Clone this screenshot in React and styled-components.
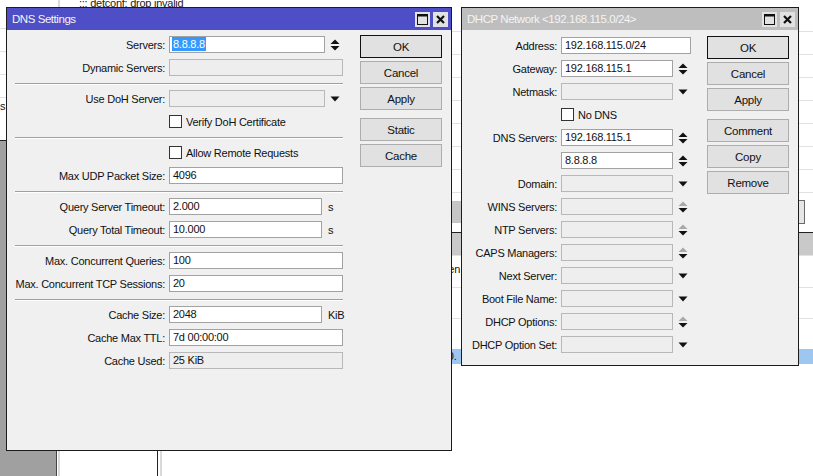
import React from 'react';
import styled, { createGlobalStyle } from 'styled-components';

const GlobalStyle = createGlobalStyle`
  body {
    margin: 0;
    font-family: 'Liberation Sans', Arial, sans-serif;
    font-size: 11px;
    letter-spacing: -0.25px;
    color: #111;
  }
`;

const Desktop = styled.div`
  position: relative;
  width: 813px;
  height: 476px;
  overflow: hidden;
  background: #a0a0a0;
`;

/* ---------- windows behind the dialogs ---------- */

const LeftBack = styled.div`
  position: absolute;
  left: 0;
  top: 0;
  width: 57px;
  height: 140px;
  background: #fff;
  border-bottom: 1px solid #222;
  display: flex;
  flex-direction: column;
`;

const Lines = styled.div`
  height: ${(p) => p.$h}px;
  flex-shrink: 0;
  background: repeating-linear-gradient(
    to bottom,
    transparent 0 ${(p) => p.$pitch - 1}px,
    #e2e2e2 ${(p) => p.$pitch - 1}px ${(p) => p.$pitch}px
  );
  background-position: 0 ${(p) => p.$off || 0}px;
`;

const CutText = styled.div`
  white-space: nowrap;
  padding-left: ${(p) => p.$pad || 0}px;
  padding-top: ${(p) => p.$top || 0}px;
  line-height: 13px;
`;

const BackList = styled.div`
  position: absolute;
  left: 56px;
  top: 0;
  width: 760px;
  height: 476px;
  background: #fff;
  border-left: 1px solid #444;
  display: flex;
  flex-direction: column;
`;

const LogRow = styled.div`
  height: 9px;
  flex-shrink: 0;
  border-left: 2px solid #dadada;
  margin-left: 1px;
  padding-left: 19px;
  line-height: 13px;
  margin-top: -3px;
  padding-top: 0;
  white-space: nowrap;
  color: #222;
  overflow: visible;
`;

const ListColumns = styled.div`
  flex: 1;
  display: flex;
`;

const ListColumn = styled.div`
  width: ${(p) => (p.$w ? `${p.$w}px` : 'auto')};
  flex: ${(p) => (p.$w ? 'none' : '1')};
  margin-left: ${(p) => p.$gap}px;
  border-left: 2px solid #dadada;
  border-right: ${(p) => (p.$w ? '1px solid #222' : 'none')};
`;

const BackTable = styled.div`
  position: absolute;
  left: 440px;
  top: 0;
  width: 373px;
  height: 380px;
  background: #fff;
  display: flex;
  flex-direction: column;
`;

const ToolStrip = styled.div`
  height: 28px;
  display: flex;
  align-items: center;
  justify-content: space-between;
  padding-right: 8px;
`;

const ToolBlock = styled.div`
  width: ${(p) => p.$w}px;
  height: 22px;
  background: ${(p) => p.$bg};
  border: ${(p) => (p.$border ? '1px solid #6a6a6a' : 'none')};
`;

const HeaderBand = styled.div`
  margin-top: 6px;
  height: 22px;
  background: #c9c9c9;
  border-top: 1px solid #222;
`;

const SelectedRow = styled.div`
  height: 15px;
  background: #9dc6f0;
  line-height: 15px;
  padding-left: 2px;
`;

/* ---------- dialog windows ---------- */

const Window = styled.div`
  position: absolute;
  left: ${(p) => p.$x}px;
  top: ${(p) => p.$y}px;
  width: ${(p) => p.$w}px;
  height: ${(p) => p.$h}px;
  box-sizing: border-box;
  border: 1px solid #1c1c1c;
  background: #f0f0f0;
  display: flex;
  flex-direction: column;
`;

const TitleBar = styled.div`
  height: 22px;
  flex-shrink: 0;
  display: flex;
  align-items: center;
  padding: 0 3px 0 5px;
  background: ${(p) => (p.$active ? '#4e4ec6' : '#bebebe')};
  color: #f4f4f4;
  font-size: 11.5px;
  letter-spacing: -0.45px;
`;

const TitleButtons = styled.div`
  margin-left: auto;
  display: flex;
  gap: 3px;
`;

const TitleButton = styled.div`
  width: 15px;
  height: 15px;
  background: #e2e2e2;
  display: flex;
  align-items: center;
  justify-content: center;
`;

const Body = styled.div`
  display: flex;
  align-items: flex-start;
  padding: ${(p) => p.$top}px 0 0 8px;
`;

const Form = styled.div`
  width: ${(p) => p.$w}px;
  display: flex;
  flex-direction: column;
`;

const Row = styled.div`
  display: flex;
  align-items: center;
  height: 17px;
  margin-bottom: 6px;
  padding-left: ${(p) => p.$indent || 0}px;
`;

const Label = styled.div`
  width: ${(p) => p.$w}px;
  flex-shrink: 0;
  margin-right: 4px;
  display: flex;
  justify-content: flex-end;
  white-space: nowrap;
`;

const Field = styled.div`
  box-sizing: border-box;
  width: ${(p) => p.$w}px;
  height: 17px;
  flex-shrink: 0;
  border: 1px solid ${(p) => (p.$disabled ? '#b8b8b8' : '#a2a2a2')};
  background: ${(p) => (p.$disabled ? '#eeeeee' : '#fff')};
  padding-left: 3px;
  line-height: 15px;
  white-space: nowrap;
  overflow: hidden;
`;

const Selected = styled.span`
  margin-left: -1px;
  padding: 1px 1px;
  background: #3399ff;
  color: #fff;
`;

const Suffix = styled.div`
  width: 22px;
  margin-left: 1px;
  display: flex;
  justify-content: center;
  align-items: center;
`;

const Unit = styled.span`
  margin-left: 6px;
`;

const Check = styled.div`
  width: 13px;
  height: 13px;
  box-sizing: border-box;
  border: 1px solid #333;
  background: #fff;
  margin-right: 4px;
`;

const Separator = styled.div`
  border-top: 1px solid #a0a0a0;
  border-bottom: 1px solid #fff;
  margin: 1px 0 5px;
`;

const ButtonCol = styled.div`
  display: flex;
  flex-direction: column;
  margin: -1px 0 0 ${(p) => p.$gap}px;
`;

const Button = styled.div`
  box-sizing: border-box;
  width: 82px;
  height: 23px;
  margin-bottom: 3px;
  margin-top: ${(p) => (p.$group ? 5 : 0)}px;
  border: 1px solid ${(p) => (p.$default ? '#111' : '#adadad')};
  background: #e1e1e1;
  display: flex;
  align-items: center;
  justify-content: center;
  font-size: 11.5px;
`;

/* ---------- glyphs ---------- */

const MaxIcon = () => (
  <svg width="11" height="11" viewBox="0 0 11 11">
    <rect x="0.5" y="0.5" width="10" height="10" fill="none" stroke="#111" />
    <rect x="0.5" y="0.5" width="10" height="2" fill="#111" />
  </svg>
);

const CloseIcon = () => (
  <svg width="11" height="11" viewBox="0 0 11 11">
    <path d="M2 2 L9 9 M9 2 L2 9" stroke="#111" strokeWidth="2.2" />
  </svg>
);

const SpinArrows = ({ dimUp }) => (
  <svg width="10" height="14" viewBox="0 0 10 14">
    <path d="M0.5 6 L5 1.5 L9.5 6 Z" fill={dimUp ? '#a9a9a9' : '#111'} />
    <path d="M0.5 8 L9.5 8 L5 12.5 Z" fill="#111" />
  </svg>
);

const DropArrow = () => (
  <svg width="10" height="6" viewBox="0 0 10 6">
    <path d="M0.5 0.5 L9.5 0.5 L5 5.5 Z" fill="#111" />
  </svg>
);

const WindowControls = () => (
  <TitleButtons>
    <TitleButton>
      <MaxIcon />
    </TitleButton>
    <TitleButton>
      <CloseIcon />
    </TitleButton>
  </TitleButtons>
);

/* ---------- DNS Settings ---------- */

const DNS_LABEL = 150;

const DnsSettings = () => (
  <Window $x={6} $y={7} $w={446} $h={444}>
    <TitleBar $active>
      <span>DNS Settings</span>
      <WindowControls />
    </TitleBar>
    <Body $top={6}>
      <Form $w={328}>
        <Row>
          <Label $w={DNS_LABEL}>Servers:</Label>
          <Field $w={156}>
            <Selected>8.8.8.8</Selected>
          </Field>
          <Suffix>
            <SpinArrows />
          </Suffix>
        </Row>
        <Row>
          <Label $w={DNS_LABEL}>Dynamic Servers:</Label>
          <Field $w={174} $disabled />
        </Row>
        <Separator />
        <Row>
          <Label $w={DNS_LABEL}>Use DoH Server:</Label>
          <Field $w={156} $disabled />
          <Suffix>
            <DropArrow />
          </Suffix>
        </Row>
        <Row $indent={DNS_LABEL + 4}>
          <Check />
          <span>Verify DoH Certificate</span>
        </Row>
        <Separator />
        <Row $indent={DNS_LABEL + 4}>
          <Check />
          <span>Allow Remote Requests</span>
        </Row>
        <Row>
          <Label $w={DNS_LABEL}>Max UDP Packet Size:</Label>
          <Field $w={174}>4096</Field>
        </Row>
        <Separator />
        <Row>
          <Label $w={DNS_LABEL}>Query Server Timeout:</Label>
          <Field $w={153}>2.000</Field>
          <Unit>s</Unit>
        </Row>
        <Row>
          <Label $w={DNS_LABEL}>Query Total Timeout:</Label>
          <Field $w={153}>10.000</Field>
          <Unit>s</Unit>
        </Row>
        <Separator />
        <Row>
          <Label $w={DNS_LABEL}>Max. Concurrent Queries:</Label>
          <Field $w={174}>100</Field>
        </Row>
        <Row>
          <Label $w={DNS_LABEL}>Max. Concurrent TCP Sessions:</Label>
          <Field $w={174}>20</Field>
        </Row>
        <Separator />
        <Row>
          <Label $w={DNS_LABEL}>Cache Size:</Label>
          <Field $w={153}>2048</Field>
          <Unit>KiB</Unit>
        </Row>
        <Row>
          <Label $w={DNS_LABEL}>Cache Max TTL:</Label>
          <Field $w={174}>7d 00:00:00</Field>
        </Row>
        <Row>
          <Label $w={DNS_LABEL}>Cache Used:</Label>
          <Field $w={174} $disabled>
            25 KiB
          </Field>
        </Row>
      </Form>
      <ButtonCol $gap={17}>
        <Button $default>OK</Button>
        <Button>Cancel</Button>
        <Button>Apply</Button>
        <Button $group>Static</Button>
        <Button>Cache</Button>
      </ButtonCol>
    </Body>
  </Window>
);

/* ---------- DHCP Network ---------- */

const DHCP_LABEL = 87;

const dhcpRows = [
  { label: 'Domain:', kind: 'drop' },
  { label: 'WINS Servers:', kind: 'spin', dim: true },
  { label: 'NTP Servers:', kind: 'spin', dim: true },
  { label: 'CAPS Managers:', kind: 'spin', dim: true },
  { label: 'Next Server:', kind: 'drop' },
  { label: 'Boot File Name:', kind: 'drop' },
  { label: 'DHCP Options:', kind: 'spin', dim: true },
  { label: 'DHCP Option Set:', kind: 'drop' },
];

const DhcpNetwork = () => (
  <Window $x={461} $y={7} $w={338} $h={359}>
    <TitleBar>
      <span>DHCP Network &lt;192.168.115.0/24&gt;</span>
      <WindowControls />
    </TitleBar>
    <Body $top={7}>
      <Form $w={221}>
        <Row>
          <Label $w={DHCP_LABEL}>Address:</Label>
          <Field $w={130}>192.168.115.0/24</Field>
        </Row>
        <Row>
          <Label $w={DHCP_LABEL}>Gateway:</Label>
          <Field $w={112}>192.168.115.1</Field>
          <Suffix>
            <SpinArrows />
          </Suffix>
        </Row>
        <Row>
          <Label $w={DHCP_LABEL}>Netmask:</Label>
          <Field $w={112} $disabled />
          <Suffix>
            <DropArrow />
          </Suffix>
        </Row>
        <Row $indent={DHCP_LABEL + 4}>
          <Check />
          <span>No DNS</span>
        </Row>
        <Row>
          <Label $w={DHCP_LABEL}>DNS Servers:</Label>
          <Field $w={112}>192.168.115.1</Field>
          <Suffix>
            <SpinArrows />
          </Suffix>
        </Row>
        <Row $indent={DHCP_LABEL + 4}>
          <Field $w={112}>8.8.8.8</Field>
          <Suffix>
            <SpinArrows />
          </Suffix>
        </Row>
        {dhcpRows.map((r) => (
          <Row key={r.label}>
            <Label $w={DHCP_LABEL}>{r.label}</Label>
            <Field $w={112} $disabled />
            <Suffix>{r.kind === 'spin' ? <SpinArrows dimUp={r.dim} /> : <DropArrow />}</Suffix>
          </Row>
        ))}
      </Form>
      <ButtonCol $gap={16}>
        <Button $default>OK</Button>
        <Button>Cancel</Button>
        <Button>Apply</Button>
        <Button $group>Comment</Button>
        <Button>Copy</Button>
        <Button>Remove</Button>
      </ButtonCol>
    </Body>
  </Window>
);

export default function App() {
  return (
    <>
      <GlobalStyle />
      <Desktop>
        <BackList>
          <LogRow>;;; detconf: drop invalid</LogRow>
          <ListColumns>
            <ListColumn $w={97} $gap={1} />
            <ListColumn $gap={2} />
          </ListColumns>
        </BackList>
        <LeftBack>
          <Lines $h={100} $pitch={23} $off={6} />
          <CutText>s</CutText>
        </LeftBack>
        <BackTable>
          <Lines $h={198} $pitch={23} $off={9} />
          <ToolStrip>
            <ToolBlock $w={22} $bg="#c6c6c6" />
            <ToolBlock $w={16} $bg="#e6e6e6" $border />
          </ToolStrip>
          <HeaderBand />
          <Lines $h={94} $pitch={31} $off={2}>
            <CutText $top={8}>Gen</CutText>
          </Lines>
          <SelectedRow>10.</SelectedRow>
        </BackTable>
        <DnsSettings />
        <DhcpNetwork />
      </Desktop>
    </>
  );
}
